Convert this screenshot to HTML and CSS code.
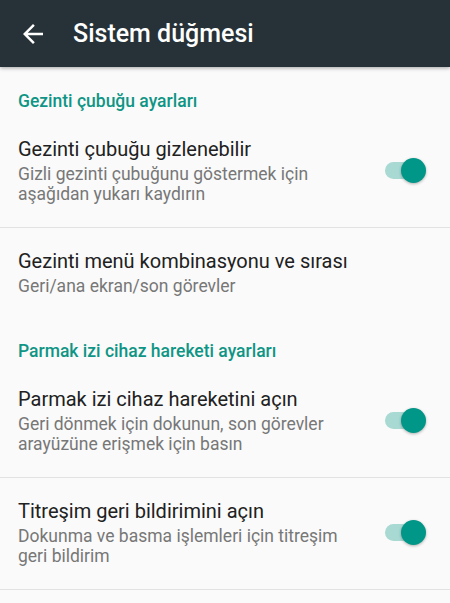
FILE: index.html
```html
<!DOCTYPE html>
<html lang="tr">
<head>
    <meta charset="UTF-8">
    <title>Sistem düğmesi</title>
    <link rel="stylesheet" href="styles.css">
</head>
<body>
    <div class="toolbar">
        <svg class="back" viewBox="0 0 24 24" width="30" height="30">
            <path d="M20 11H7.83l5.59-5.59L12 4l-8 8 8 8 1.41-1.41L7.83 13H20v-2z" fill="#fff"/>
        </svg>
        <div class="title">Sistem düğmesi</div>
    </div>
    <div class="list">
        <div class="category">Gezinti çubuğu ayarları</div>
        <div class="item divided">
            <div class="text">
                <div class="item-title">Gezinti çubuğu gizlenebilir</div>
                <div class="summary">Gizli gezinti çubuğunu göstermek için aşağıdan yukarı kaydırın</div>
            </div>
            <div class="widget"><div class="switch"><div class="track"></div><div class="thumb"></div></div></div>
        </div>
        <div class="item">
            <div class="text">
                <div class="item-title">Gezinti menü kombinasyonu ve sırası</div>
                <div class="summary">Geri/ana ekran/son görevler</div>
            </div>
        </div>
        <div class="category">Parmak izi cihaz hareketi ayarları</div>
        <div class="item divided">
            <div class="text">
                <div class="item-title">Parmak izi cihaz hareketini açın</div>
                <div class="summary">Geri dönmek için dokunun, son görevler arayüzüne erişmek için basın</div>
            </div>
            <div class="widget"><div class="switch"><div class="track"></div><div class="thumb"></div></div></div>
        </div>
        <div class="item divided">
            <div class="text">
                <div class="item-title">Titreşim geri bildirimini açın</div>
                <div class="summary">Dokunma ve basma işlemleri için titreşim geri bildirim</div>
            </div>
            <div class="widget"><div class="switch"><div class="track"></div><div class="thumb"></div></div></div>
        </div>
    </div>
</body>
</html>
```

FILE: styles.css
```css
body {
    margin: 0;
    font-family: Roboto, "Noto Sans", sans-serif;
    background: #fafafa;
    overflow: hidden;
}
.toolbar {
    height: 67px;
    background: #263238;
    display: flex;
    align-items: center;
    box-shadow: 0 1px 4px rgba(0, 0, 0, 0.35);
    position: relative;
}
.back {
    margin-left: 18px;
    margin-right: 25px;
}
.title {
    color: #fff;
    font-size: 25px;
    font-weight: 500;
    line-height: 30px;
}
.list {
    padding-top: 2px;
}
.category {
    padding: 22px 18px 5px;
    font-size: 17.5px;
    line-height: 20px;
    font-weight: 500;
    color: #0f9585;
}
.item {
    display: flex;
    align-items: center;
    padding: 21px 24px 23px 18px;
}
.item.divided {
    border-bottom: 1px solid #e2e2e2;
}
.text {
    flex: 1;
}
.item-title {
    font-size: 20px;
    line-height: 24px;
    color: #212121;
}
.summary {
    margin-top: 3px;
    font-size: 17.5px;
    line-height: 20px;
    color: #777;
}
.widget {
    width: 66px;
    display: flex;
    justify-content: flex-end;
}
.switch {
    position: relative;
    width: 41px;
    height: 25px;
}
.track {
    margin-top: 4px;
    width: 40px;
    height: 17px;
    border-radius: 9px;
    background: #a9d9d3;
}
.thumb {
    position: absolute;
    right: 0;
    top: 0;
    width: 25px;
    height: 25px;
    border-radius: 50%;
    background: #009688;
    box-shadow: 0 1px 3px rgba(0, 0, 0, 0.3);
}
```
